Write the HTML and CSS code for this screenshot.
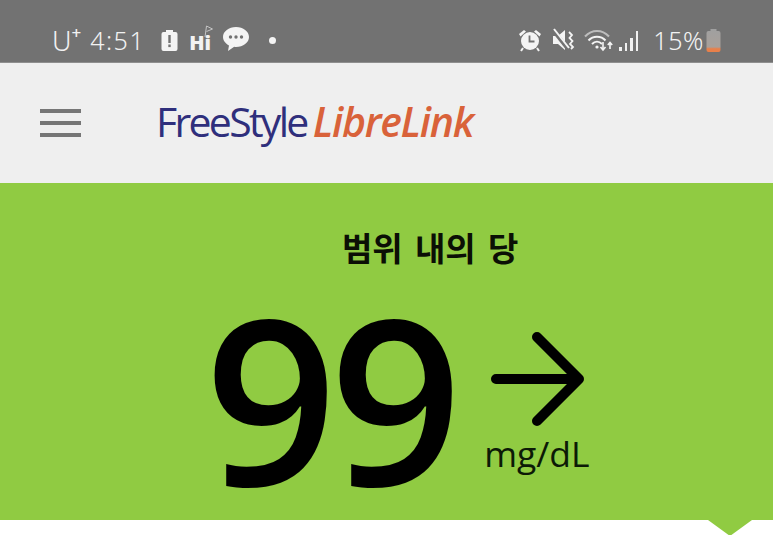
FILE: index.html
```html
<!DOCTYPE html>
<html lang="ko">
<head>
<meta charset="utf-8">
<title>FreeStyle LibreLink</title>
<link rel="stylesheet" href="styles.css">
</head>
<body>
<div class="app">
  <div class="status">
    <div class="status-left">
      <span class="carrier">U<sup class="plus">+</sup></span>
      <span class="time">4:51</span>
      <svg class="ic-batt" width="17" height="24" viewBox="0 0 17 24"><path d="M5 2h7v2h2.500a2 2 0 0 1 2 2v15a2 2 0 0 1-2 2h-12a2 2 0 0 1-2-2V6a2 2 0 0 1 2-2H5z" fill="#f4f4f4"/><rect x="7.300" y="7" width="2.400" height="8" fill="#727272"/><rect x="7.300" y="16.500" width="2.400" height="2.600" fill="#727272"/></svg>
      <span class="hi">Hi<svg class="hi-flag" width="11" height="13" viewBox="0 0 11 13"><path d="M2 12L3.500 1l6 3-6 2.500" fill="none" stroke="#c4c4c4" stroke-width="1"/></svg></span>
      <svg class="ic-talk" width="28" height="26" viewBox="0 0 28 26"><path d="M14 1C6.800 1 1 5.500 1 11c0 3.500 2.400 6.600 6 8.400L6 25l6.200-4.200c.6.100 1.200.2 1.800.2 7.200 0 13-4.500 13-10S21.200 1 14 1z" fill="#f4f4f4"/><circle cx="8.500" cy="11" r="1.700" fill="#727272"/><circle cx="14" cy="11" r="1.700" fill="#727272"/><circle cx="19.500" cy="11" r="1.700" fill="#727272"/></svg>
      <span class="dot"></span>
    </div>
    <div class="status-right">
      <svg class="ic-alarm" width="24" height="24" viewBox="0 0 24 24"><circle cx="12" cy="13" r="9" fill="#f4f4f4"/><path d="M1 6l5-4 2 1.500-5.500 5zM23 6l-5-4-2 1.500 5.500 5z" fill="#f4f4f4"/><path d="M5 20l-2 3M19 20l2 3" stroke="#f4f4f4" stroke-width="2"/><path d="M11.500 7.500v6h5" fill="none" stroke="#727272" stroke-width="1.800"/></svg>
      <svg class="ic-mute" width="24" height="24" viewBox="0 0 24 24"><path d="M1 8h5l7-6v20l-7-6H1z" fill="#f4f4f4"/><path d="M1 2l15 19" stroke="#727272" stroke-width="4"/><path d="M2 1l15 19" stroke="#f4f4f4" stroke-width="2"/><path d="M17 4l3 3-2.500 3 3 3-2.500 3 3 3-2 2" fill="none" stroke="#f4f4f4" stroke-width="1.800"/></svg>
      <svg class="ic-wifi" width="30" height="24" viewBox="0 0 30 24"><path d="M1 8.500C8 1 18 1 25 8.500" fill="none" stroke="#bdbdbd" stroke-width="2"/><path d="M4.500 12.500C9 7.500 17 7.500 21.500 12.500" fill="none" stroke="#f4f4f4" stroke-width="2"/><path d="M8 16c3-3 7-3 10 0" fill="none" stroke="#f4f4f4" stroke-width="2"/><circle cx="13" cy="19" r="1.600" fill="#f4f4f4"/><path d="M19 14v7M16.500 19l2.500 3 2.500-3" fill="none" stroke="#f4f4f4" stroke-width="1.600"/><path d="M26 21v-6M23.800 17l2.200-2.500 2.200 2.500" fill="none" stroke="#f4f4f4" stroke-width="1.600"/></svg>
      <div class="bars"><i class="b1"></i><i class="b2"></i><i class="b3"></i><i class="b4"></i></div>
      <span class="pct">15%</span>
      <svg class="ic-low" width="15" height="24" viewBox="0 0 15 24"><defs><linearGradient id="lowfill" x1="0" y1="0" x2="0" y2="1"><stop offset="0" stop-color="#a0a0a0"/><stop offset="0.780" stop-color="#a8a09a"/><stop offset="0.860" stop-color="#e8804a"/><stop offset="1" stop-color="#e8804a"/></linearGradient></defs><path d="M4.500 1h6v2h2a2 2 0 0 1 2 2v17a2 2 0 0 1-2 2h-10a2 2 0 0 1-2-2V5a2 2 0 0 1 2-2h2z" fill="url(#lowfill)"/></svg>
    </div>
  </div>
  <header class="toolbar">
    <div class="menu"><i></i><i></i><i></i></div>
    <div class="logo"><span class="logo-a">FreeStyle</span><span class="logo-b">LibreLink</span></div>
  </header>
  <main class="reading">
    <div class="msg">범위 내의 당</div>
    <div class="value-row">
      <div class="value">99</div>
      <div class="side">
        <svg class="arrow" width="96" height="96" viewBox="0 0 96 96"><path d="M6 48h82M47 6l42 42-42 42" fill="none" stroke="#000" stroke-width="10" stroke-linecap="round" stroke-linejoin="round"/></svg>
        <div class="unit">mg/dL</div>
      </div>
    </div>
  </main>
  <div class="foot"><span class="notch"></span></div>
</div>
</body>
</html>
```
FILE: styles.css
```css
* { box-sizing: border-box; }
html, body { margin: 0; padding: 0; }
body { width: 773px; height: 535px; overflow: hidden; background: #fff; font-family: "Open Sans", "Noto Sans CJK KR", sans-serif; }
.app { display: flex; flex-direction: column; height: 535px; }

.status { height: 63px; background: #727272; display: flex; justify-content: space-between; align-items: center; padding: 18px 52px 0 52px; color: #f2f2f2; border-bottom: 1px solid #8f8f8f; }
.status-left, .status-right { display: flex; align-items: center; }
.carrier { font: 300 27px/1 "Noto Sans", sans-serif; display: flex; align-items: flex-start; }
.plus { font-size: 17px; line-height: 1; margin: -3px 0 0 0; font-weight: 500; vertical-align: baseline; }
.time { font: 300 25px/1 "Noto Sans", sans-serif; letter-spacing: 1.500px; margin-left: 9px; }
.ic-batt { margin-left: 16px; }
.hi { position: relative; font: 800 20px/1 "Open Sans", sans-serif; margin-left: 11px; padding-top: 5px; }
.hi-flag { position: absolute; left: 14px; top: -3px; }
.ic-talk { margin-left: 11px; margin-top: -2px; }
.dot { width: 7px; height: 7px; border-radius: 50%; background: #f4f4f4; margin-left: 19px; }

.ic-mute { margin-left: 10px; }
.ic-wifi { margin-left: 8px; }
.bars { display: flex; align-items: flex-end; gap: 3px; height: 22px; margin-left: 5px; }
.bars i { display: block; width: 2.500px; background: #f0f0f0; }
.b1 { height: 4px; }
.b2 { height: 8px; }
.b3 { height: 13px; }
.b4 { height: 20px; }
.pct { font: 300 25px/1 "Noto Sans", sans-serif; letter-spacing: 0.600px; margin-left: 15px; }
.ic-low { margin-left: 2px; }

.toolbar { height: 120px; background: #efefef; display: flex; align-items: center; padding: 0 40px; }
.menu { width: 41px; display: flex; flex-direction: column; gap: 8px; }
.menu i { display: block; height: 4px; background: #767676; }
.logo { margin: 0 0 4px 75px; display: flex; align-items: baseline; white-space: nowrap; }
.logo-a { font: 400 41px/1 "Open Sans", sans-serif; color: #2f2f7c; letter-spacing: -2.700px; }
.logo-b { font: italic 600 41px/1 "Open Sans", sans-serif; color: #d9623a; letter-spacing: -1.250px; margin-left: 6px; }

.reading { height: 337px; background: #90cb42; display: flex; flex-direction: column; align-items: flex-start; }
.msg { font: 700 33px/1 "Noto Sans CJK KR", sans-serif; color: #0b0f05; margin: 48px 0 0 342px; word-spacing: 3px; white-space: nowrap; }
.value-row { display: flex; align-items: flex-start; margin: 13px 0 0 205px; }
.value { font: 600 231px/240px "Open Sans", sans-serif; color: #000; letter-spacing: -7px; height: 240px; }
.side { display: flex; flex-direction: column; align-items: flex-start; margin-left: 35px; padding-top: 54px; }
.arrow { display: block; }
.unit { font: 400 35.500px/1 "Open Sans", sans-serif; color: #0c1a06; margin: 9px 0 0 -6px; white-space: nowrap; }

.foot { flex: 1; background: #fff; position: relative; }
.notch { position: absolute; left: 708px; top: 0; width: 0; height: 0; border-left: 22px solid transparent; border-right: 22px solid transparent; border-top: 16px solid #90cb42; }
```
